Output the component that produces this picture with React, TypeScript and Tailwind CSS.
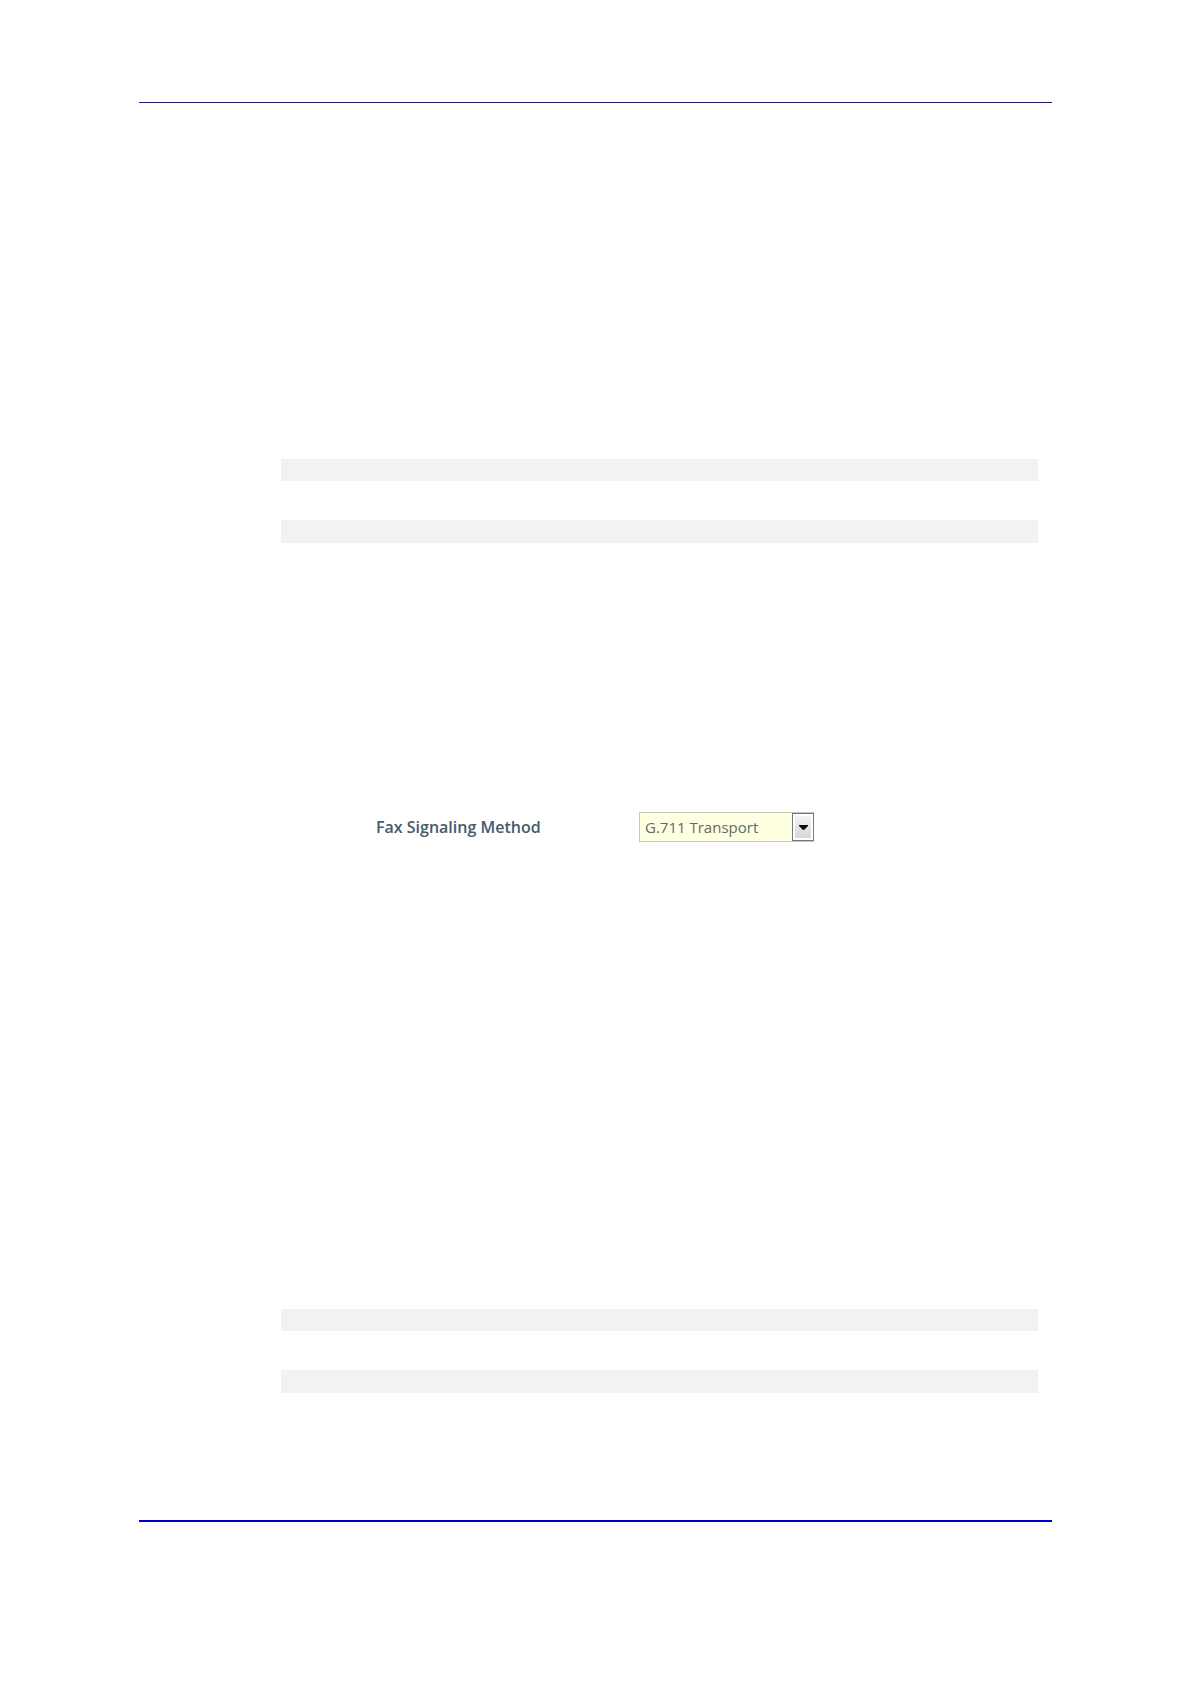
function CodeBand() {
  return (
    <div className="ml-[142px] mr-[14px] flex flex-col gap-[39px]">
      <div className="h-[22px] bg-[#f2f2f2]" />
      <div className="h-[23px] bg-[#f2f2f2]" />
    </div>
  );
}

function FaxSetting() {
  return (
    <div className="ml-[237px] flex h-[30px] items-center">
      <label
        htmlFor="fax-method"
        className="w-[263px] text-[16px] leading-5 font-semibold text-[#465a69]"
      >
        Fax Signaling Method
      </label>
      <div className="relative w-[175px]">
        <select
          id="fax-method"
          defaultValue="g711"
          className="block h-[30px] w-full appearance-none rounded-none border border-[#c8c8c0] bg-[#ffffe1] pr-6 pl-[5px] text-[15px] text-[#626a68] outline-none"
        >
          <option value="g711">G.711 Transport</option>
        </select>
        <span className="pointer-events-none absolute inset-y-px right-0 flex w-[22px] items-center justify-center border border-[#77777a] bg-white p-0.5">
          <span className="flex h-full w-full items-center justify-center bg-gradient-to-b from-[#f4f4f4] to-[#d6d6d9]">
            <svg width="9" height="5" viewBox="0 0 9 5" aria-hidden="true">
              <path d="M0 0H9V1L5 5H4L0 1Z" fill="#0c0c0c" />
            </svg>
          </span>
        </span>
      </div>
    </div>
  );
}

export default function App() {
  return (
    <main className="min-h-screen bg-white px-[139px] pt-[102px] font-['Open_Sans',sans-serif]">
      <hr className="h-px border-0 bg-[#1414b4]" />
      <div className="pt-[356px]">
        <CodeBand />
      </div>
      <div className="pt-[269px]">
        <FaxSetting />
      </div>
      <div className="pt-[467px] pb-[127px]">
        <CodeBand />
      </div>
      <hr className="h-0.5 border-0 bg-[#0000cd]" />
    </main>
  );
}
